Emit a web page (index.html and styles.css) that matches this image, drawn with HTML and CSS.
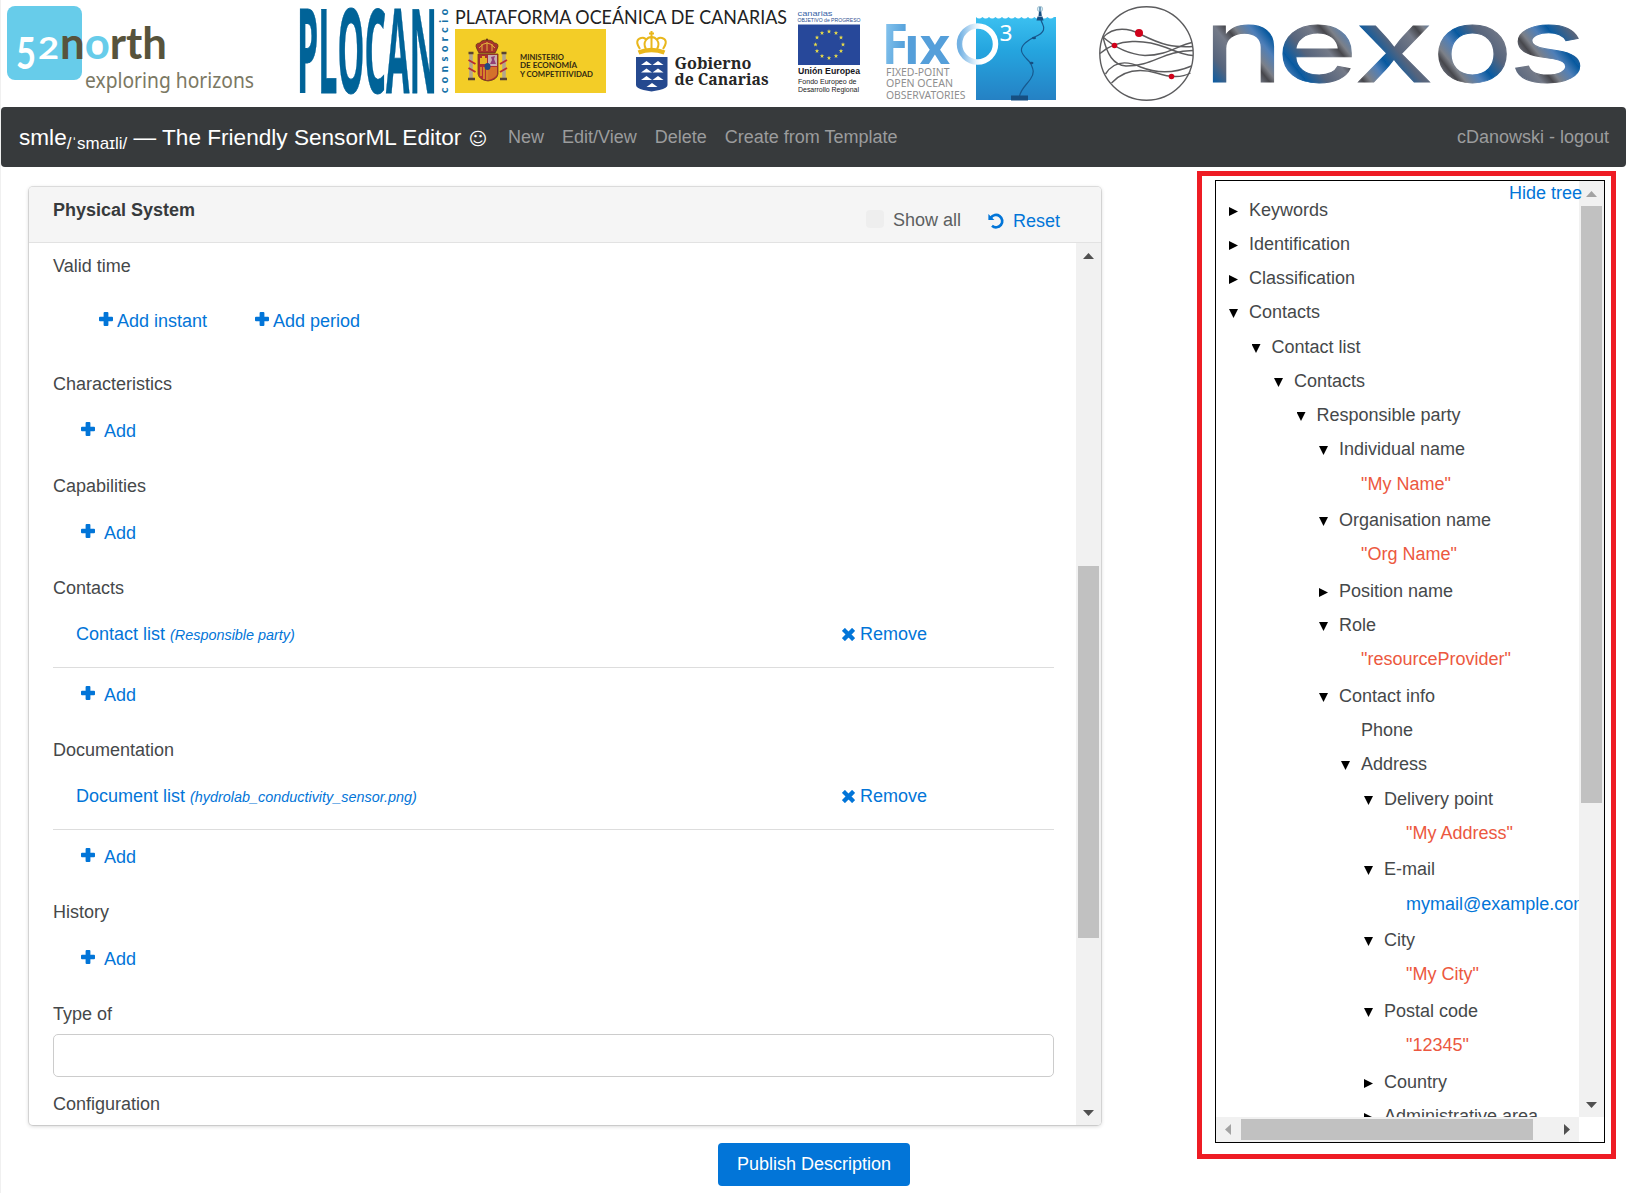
FILE: index.html
```html
<!DOCTYPE html>
<html lang="en">
<head>
<meta charset="utf-8">
<title>smle</title>
<link rel="stylesheet" href="styles.css">
</head>
<body>
<svg width="0" height="0" class="defs" aria-hidden="true">
  <defs>
    <symbol id="plus" viewBox="0 0 14 14"><path d="M5.6 0h2.8a1 1 0 0 1 1 1v3.8H13a1 1 0 0 1 1 1v2.4a1 1 0 0 1-1 1H9.400V13a1 1 0 0 1-1 1H5.600a1 1 0 0 1-1-1V9.200H1a1 1 0 0 1-1-1V5.800a1 1 0 0 1 1-1h3.600V1a1 1 0 0 1 1-1z"/></symbol>
    <symbol id="cross" viewBox="0 0 12 12"><path d="M2.700 2.700 9.300 9.300M9.300 2.700 2.700 9.300" fill="none" stroke="currentColor" stroke-width="4" stroke-linecap="square"/></symbol>
    <symbol id="undo" viewBox="0 0 16 16"><path d="M2.800 4.800A6.200 6.200 0 1 1 4 12.800" fill="none" stroke="currentColor" stroke-width="2.700"/><path d="M.4 1v6h6z"/></symbol>
    <path id="star" d="M0-2.300.6-.7 2.200-.7.9.3 1.400 1.900 0 .9-1.400 1.900-.9.3-2.200-.7-.6-.7z"/>
  </defs>
</svg>

<header class="logos">
  <svg class="logo" width="270" height="107" viewBox="0 0 270 107">
    <rect x="7" y="6" width="75" height="74" rx="8" fill="#67ccea"/>
    <g font-family="Lato" font-weight="700">
      <text x="16" y="69" font-size="43" fill="#fff" textLength="20" lengthAdjust="spacingAndGlyphs">5</text>
      <text x="38" y="59" font-size="31" fill="#fff" textLength="21" lengthAdjust="spacingAndGlyphs">2</text>
      <text x="60" y="59" font-size="43" fill="#57533c" textLength="107" lengthAdjust="spacingAndGlyphs">n<tspan fill="#67ccea">o</tspan>rth</text>
    </g>
    <text x="85" y="88" font-size="22.500" font-family="Noto Sans" fill="#7b7863" textLength="169" lengthAdjust="spacingAndGlyphs">exploring horizons</text>
  </svg>

  <svg class="logo" width="600" height="107" viewBox="270 0 600 107">
    <text x="297" y="93" font-size="116" font-family="Open Sans" font-weight="700" fill="#006398" stroke="#006398" stroke-width=".8" textLength="140" lengthAdjust="spacingAndGlyphs">PLOCAN</text>
    <text transform="translate(447.500 93) rotate(-90)" font-size="11" font-family="Lato" font-weight="900" fill="#1671a8" textLength="84">consorcio</text>
    <text x="455" y="24" font-size="18.500" font-family="Lato" fill="#222" textLength="332" lengthAdjust="spacingAndGlyphs">PLATAFORMA OCEÁNICA DE CANARIAS</text>
    <rect x="455" y="29" width="151" height="64" fill="#f3cd27"/>
    <g>
      <path d="M477 49q-3-6 3-6 1-3 7-3t7 3q6 0 3 6l-2 4h-16z" fill="#a8332b" stroke="#5f3018" stroke-width=".8"/>
      <path d="M479 48q4-5 8-5t8 5M482 51v-7M487 51v-9M492 51v-7" fill="none" stroke="#e2b33b" stroke-width="1"/>
      <circle cx="487" cy="39.500" r="1" fill="#5f3018"/>
      <path d="M478 54h20v20q-1 6-10 7-9-1-10-7z" fill="#b32d33" stroke="#683d22" stroke-width=".8"/>
      <path d="M479 55h9v11h-9z" fill="#a82f31"/><path d="M488 55h9v11h-9z" fill="#c8aeb0"/>
      <path d="M480 64v-6h2v-2h3v2h2v6z" fill="#e6b425"/><path d="M490 64l2-4-1-3 4-1-1 3 2 5z" fill="#914076"/>
      <path d="M481 67v9M484 67v12M487 69v11" stroke="#e6b425" stroke-width="1.300"/>
      <path d="M488 67h9v7q-1 4-9 6z" fill="#d4722b"/>
      <ellipse cx="487.500" cy="66.500" rx="3" ry="3.600" fill="#23497f"/>
      <path d="M471 54v24M504 54v24" stroke="#b3a58d" stroke-width="3.600"/>
      <path d="M468.500 60l7 4M468.500 68l7 4M500 64l7-4M500 72l7-4" stroke="#b62f32" stroke-width="2"/>
      <path d="M468 79h7M500 79h7M468.500 53h5M501.500 53h5" stroke="#5a4430" stroke-width="2.600"/>
    </g>
    <g font-family="Lato" font-weight="700" font-size="7" fill="#332b12">
      <text x="520" y="59.500" textLength="44" lengthAdjust="spacingAndGlyphs">MINISTERIO</text>
      <text x="520" y="68" textLength="57" lengthAdjust="spacingAndGlyphs">DE ECONOMÍA</text>
      <text x="520" y="76.500" textLength="73" lengthAdjust="spacingAndGlyphs">Y COMPETITIVIDAD</text>
    </g>
    <g fill="none" stroke="#e9b71c" stroke-width="2">
      <path d="M651.500 31v6M649 33.500h5"/>
      <path d="M640 49q-6-9 1-11 4-1 5 2 2-3 5.500-3t5.500 3q1-3 5-2 7 2 1 11M646 40q-3 4 0 9M657 40q3 4 0 9M651.500 38v10"/>
      <path d="M638.500 52.500q13-5 26 0" stroke-width="4.500"/>
    </g>
    <path d="M636 57h31.500v28q0 3-8 5l-8 1.500-8-1.500q-7.500-2-7.500-5z" fill="#25498f"/>
    <path fill="#fff" d="M641 65l5.500-4 5.500 4zM652.500 65l5.500-4 5.500 4zM641 72.500l5.500-4 5.500 4zM652.500 72.500l5.500-4 5.500 4zM641 80l5.500-4 5.500 4zM652.500 80l5.500-4 5.500 4zM646.500 87l5.500-4 5.500 4z"/>
    <g font-family="Noto Serif, DejaVu Serif, serif" font-weight="700" font-size="17" fill="#262626">
      <text x="674.500" y="68.500" textLength="77" lengthAdjust="spacingAndGlyphs">Gobierno</text>
      <text x="674.500" y="84.500" textLength="94" lengthAdjust="spacingAndGlyphs">de Canarias</text>
    </g>
    <g font-family="Liberation Sans">
      <text x="797.500" y="16" font-size="8" fill="#3a66a8" textLength="35" lengthAdjust="spacingAndGlyphs">canarias</text>
      <text x="797.500" y="21.500" font-size="5" fill="#2c4d90" textLength="63" lengthAdjust="spacingAndGlyphs">OBJETIVO de PROGRESO</text>
      <rect x="798" y="24.500" width="62" height="40.500" fill="#27489a"/>
      <g fill="#e9dc48">
        <use href="#star" x="829" y="31.500"/><use href="#star" x="836" y="33"/><use href="#star" x="841" y="37.500"/><use href="#star" x="843" y="44.500"/><use href="#star" x="841" y="51"/><use href="#star" x="836" y="56"/><use href="#star" x="829" y="58"/><use href="#star" x="822" y="56"/><use href="#star" x="817" y="51"/><use href="#star" x="815.500" y="44.500"/><use href="#star" x="817" y="37.500"/><use href="#star" x="822" y="33"/>
      </g>
      <text x="798" y="73.800" font-size="8.500" font-weight="700" fill="#16161c" textLength="62" lengthAdjust="spacingAndGlyphs">Unión Europea</text>
      <text x="798" y="84" font-size="7.500" fill="#222" textLength="58.500" lengthAdjust="spacingAndGlyphs">Fondo Europeo de</text>
      <text x="798" y="92" font-size="7.500" fill="#222" textLength="61" lengthAdjust="spacingAndGlyphs">Desarrollo Regional</text>
    </g>
  </svg>

  <svg class="logo" width="210" height="107" viewBox="870 0 210 107">
    <defs>
      <linearGradient id="sea" x1="0" y1="0" x2="0" y2="1"><stop offset="0" stop-color="#3bc0f0"/><stop offset=".4" stop-color="#25a5df"/><stop offset="1" stop-color="#2581c4"/></linearGradient>
      <linearGradient id="fix" x1="0" y1="0" x2="1" y2=".4"><stop offset="0" stop-color="#93cdf2"/><stop offset="1" stop-color="#4f9dd9"/></linearGradient>
      <linearGradient id="ring" x1="0" y1="0" x2="1" y2="0"><stop offset="0" stop-color="#72b1e3"/><stop offset=".45" stop-color="#e4f2fc"/><stop offset=".6" stop-color="#fff"/></linearGradient>
    </defs>
    <path d="M976 17q3 3 6.500 0 3 3 6.500 0 3 3 6.500 0 3 3 6.500 0 3 3 6.500 0 3 3 6.500 0 3 3 6.500 0 3 3 6.500 0 3 3 6.500 0 3 3 6.500 0 3 3 6.500 0 3 3 6.500 0H1056V100H976z" fill="url(#sea)"/>
    <text x="882" y="63.500" font-family="Noto Sans" font-weight="700" font-size="55" fill="url(#fix)" textLength="26" lengthAdjust="spacingAndGlyphs">F</text>
    <text x="904" y="63.500" font-family="Noto Sans" font-weight="700" font-size="50" fill="#559fda" textLength="46" lengthAdjust="spacingAndGlyphs">ıx</text>
    <circle cx="977.500" cy="44" r="18" fill="none" stroke="url(#ring)" stroke-width="5.500"/>
    <text x="999.500" y="41" font-family="Noto Sans" font-size="22.500" fill="#fff" textLength="13" lengthAdjust="spacingAndGlyphs">3</text>
    <g fill="none" stroke="#17598f" stroke-width="1.200"><path d="M1041 20c1 4 4 6 2.500 10-2 5-7 6-11 8-5 3-12 7-11 13 1 5 6 8 9 12 2 5 5 9 0 16-4 6-9 9-11 17"/></g>
    <path d="M1011 95.500h17v5h-17zM1036.500 20.500l1-4h5l1 4zM1038.500 16l.5-5h2.200l.6 5z" fill="#164f82"/>
    <circle cx="1040" cy="9" r="2.700" fill="#d4edf8" stroke="#87a9bb" stroke-width=".6"/><path d="M1040 7v5" stroke="#164f82"/>
    <ellipse cx="1034" cy="38" rx="2" ry="1.300" fill="#164f82"/><ellipse cx="1031.500" cy="63" rx="2" ry="1.300" fill="#164f82"/>
    <g font-family="Noto Sans" font-size="11.300" fill="#8f8f90">
      <text x="886" y="76" textLength="63.500" lengthAdjust="spacingAndGlyphs">FIXED-POINT</text>
      <text x="886" y="87.300" textLength="67" lengthAdjust="spacingAndGlyphs">OPEN OCEAN</text>
      <text x="886" y="98.800" textLength="79.500" lengthAdjust="spacingAndGlyphs">OBSERVATORIES</text>
    </g>
  </svg>

  <svg class="logo" width="546" height="107" viewBox="1080 0 546 107">
    <defs>
      <linearGradient id="steel" gradientUnits="userSpaceOnUse" x1="1213" y1="82" x2="1271" y2="36" spreadMethod="repeat"><stop offset="0" stop-color="#0a5ca3"/><stop offset=".22" stop-color="#56647c"/><stop offset=".48" stop-color="#747a88"/><stop offset=".6" stop-color="#47474c"/><stop offset=".68" stop-color="#7c8088"/><stop offset=".85" stop-color="#4f7fb8"/><stop offset="1" stop-color="#04579d"/></linearGradient>
    </defs>
    <g fill="none" stroke="#5c5c5e" stroke-width="1.400">
      <circle cx="1146.500" cy="53.500" r="46.700"/>
      <path d="M1103 37.500c11-12 27-9 38-3 22 11 32 13 52 12"/>
      <path d="M1100 53.500c18-16 46-14 66-6 12 5 20 8 27 8"/>
      <path d="M1103 37c9 8 22 17 42 18.500 22 0 33-10 47-13"/>
      <path d="M1105.500 74c9-14 22-13 35-7 20 8 37 5 51-1"/>
      <path d="M1111.500 83c14-15 31-14 45-10 15 5 25 5 34 0"/>
      <path d="M1103 37c4 17 10 28 23 29 28 0 36-15 67-15.500"/>
    </g>
    <g fill="#d0021b"><circle cx="1139" cy="33" r="4"/><circle cx="1114.500" cy="45.500" r="2.800"/><circle cx="1171.500" cy="76.500" r="2.800"/></g>
    <g font-family="Inter" font-weight="400" font-size="103" fill="url(#steel)" stroke="url(#steel)" stroke-width="1">
      <text x="1203" y="82" textLength="81" lengthAdjust="spacingAndGlyphs">n</text>
      <text x="1276" y="82" textLength="82" lengthAdjust="spacingAndGlyphs">e</text>
      <text x="1354" y="82" textLength="80" lengthAdjust="spacingAndGlyphs">x</text>
      <text x="1432" y="82" textLength="81" lengthAdjust="spacingAndGlyphs">o</text>
      <text x="1508" y="82" textLength="79" lengthAdjust="spacingAndGlyphs">s</text>
    </g>
  </svg>
</header>

<nav class="navbar">
  <span class="brand">smle<sub>/ˈsmaɪli/</sub> — The Friendly SensorML Editor <span class="smile">☺</span></span>
  <a class="nav-new">New</a><a>Edit/View</a><a>Delete</a><a>Create from Template</a>
  <a class="user">cDanowski - logout</a>
</nav>

<main class="content">
  <div class="editor">
    <section class="card">
      <div class="card-head">
        <h1>Physical System</h1>
        <span class="checkbox"></span><span class="show-all">Show all</span>
        <a class="reset"><svg width="16" height="16"><use href="#undo"/></svg>Reset</a>
      </div>
      <div class="card-body">
        <div class="fields">
          <div class="label">Valid time</div>
          <div class="time"><a><svg width="14" height="14"><use href="#plus"/></svg>Add instant</a><a><svg width="14" height="14"><use href="#plus"/></svg>Add period</a></div>
          <div class="label">Characteristics</div>
          <a class="add"><svg width="14" height="14"><use href="#plus"/></svg>Add</a>
          <div class="label">Capabilities</div>
          <a class="add"><svg width="14" height="14"><use href="#plus"/></svg>Add</a>
          <div class="label">Contacts</div>
          <div class="entry"><a class="entry-name">Contact list <i>(Responsible party)</i></a><a class="remove"><svg width="13" height="13"><use href="#cross"/></svg>Remove</a></div>
          <a class="add after-entry"><svg width="14" height="14"><use href="#plus"/></svg>Add</a>
          <div class="label">Documentation</div>
          <div class="entry"><a class="entry-name">Document list <i>(hydrolab_conductivity_sensor.png)</i></a><a class="remove"><svg width="13" height="13"><use href="#cross"/></svg>Remove</a></div>
          <a class="add after-entry"><svg width="14" height="14"><use href="#plus"/></svg>Add</a>
          <div class="label">History</div>
          <a class="add"><svg width="14" height="14"><use href="#plus"/></svg>Add</a>
          <div class="label">Type of</div>
          <input class="text-input" type="text" aria-label="Type of">
          <div class="label">Configuration</div>
        </div>
        <div class="vbar">
          <svg class="arrow" width="11" height="6"><path d="M0 6 5.500 0 11 6z"/></svg>
          <div class="thumb form-thumb"></div>
          <svg class="arrow end" width="11" height="6"><path d="M0 0h11L5.500 6z"/></svg>
        </div>
      </div>
    </section>
    <button class="publish">Publish Description</button>
  </div>

  <aside class="highlight">
    <div class="tree-box">
      <a class="hide-tree">Hide tree</a>
      <div class="tree">
        <div class="row closed d0">Keywords</div>
        <div class="row closed d0">Identification</div>
        <div class="row closed d0">Classification</div>
        <div class="row open d0 h35">Contacts</div>
        <div class="row open d1">Contact list</div>
        <div class="row open d2">Contacts</div>
        <div class="row open d3">Responsible party</div>
        <div class="row open d4 h35">Individual name</div>
        <div class="row value d5 h36">"My Name"</div>
        <div class="row open d4">Organisation name</div>
        <div class="row value d5 h37">"Org Name"</div>
        <div class="row closed d4">Position name</div>
        <div class="row open d4">Role</div>
        <div class="row value d5 h37">"resourceProvider"</div>
        <div class="row open d4">Contact info</div>
        <div class="row d5">Phone</div>
        <div class="row open d5 h35">Address</div>
        <div class="row open d6">Delivery point</div>
        <div class="row value d7 h36">"My Address"</div>
        <div class="row open d6 h35">E-mail</div>
        <div class="row mail d7 h36">mymail@example.com</div>
        <div class="row open d6">City</div>
        <div class="row value d7 h37">"My City"</div>
        <div class="row open d6">Postal code</div>
        <div class="row value d7 h37">"12345"</div>
        <div class="row closed d6">Country</div>
        <div class="row closed d6">Administrative area</div>
      </div>
      <div class="vbar">
        <svg class="arrow muted" width="11" height="6"><path d="M0 6 5.500 0 11 6z"/></svg>
        <div class="thumb tree-thumb"></div>
        <svg class="arrow end" width="11" height="6"><path d="M0 0h11L5.500 6z"/></svg>
      </div>
      <div class="hbar">
        <svg class="muted" width="6" height="11"><path d="M6 0v11L0 5.500z"/></svg>
        <div class="hthumb"></div>
        <svg class="hend" width="6" height="11"><path d="M0 0v11L6 5.500z"/></svg>
      </div>
    </div>
  </aside>
</main>
</body>
</html>
```

FILE: styles.css
```css
* { box-sizing: border-box; }

body {
  margin: 0;
  height: 1193px;
  border-left: 1px solid #f0f0f0;
  background: #fff;
  color: #45484a;
  font: 18px/27px "Liberation Sans", Arial, sans-serif;
  overflow: hidden;
}

svg { fill: currentColor; flex: none; }
.defs { display: block; height: 0; }
a { color: #0275d8; white-space: nowrap; }

.logos { display: flex; height: 107px; margin-left: -1px; }
.logo { display: block; }

.navbar {
  display: flex;
  align-items: center;
  height: 60px;
  padding: 0 17px 0 18px;
  border-radius: 4px;
  background: #373a3c;
}
.navbar a { color: #9b9c9d; margin-left: 18px; }
.navbar .nav-new { margin-left: 20px; }
.navbar .user { margin-left: auto; }
.brand { width: 469px; color: #fff; font-size: 22.6px; white-space: nowrap; }
.brand sub { font-size: 75%; line-height: 0; position: relative; vertical-align: baseline; bottom: -0.25em; }
.smile { margin-left: 1px; font-family: "DejaVu Sans", sans-serif; font-size: 18px; line-height: 1; }

.content { display: flex; align-items: flex-start; }

.editor {
  width: 1074px;
  margin: 20px 0 0 27px;
  padding-left: 1px;
}
.card {
  width: 1072px;
  height: 938px;
  border-radius: 4px;
  background: #fff;
  box-shadow: 0 1px 4px rgba(0, 0, 0, .2), 0 0 0 1px #e6e6e6;
  overflow: hidden;
  display: flex;
  flex-direction: column;
}
.card-head {
  display: flex;
  align-items: flex-start;
  height: 56px;
  padding: 10px 41px 0 24px;
  border-bottom: 1px solid #e2e2e2;
  background: #f5f5f5;
}
.card-head h1 { flex: 1; margin: 0; font-size: 18px; line-height: 27px; color: #373a3c; }
.checkbox { width: 18px; height: 18px; margin: 13px 9px 0 0; border-radius: 4px; background: #eee; }
.show-all { margin-top: 10px; color: #5c5f61; }
.reset { display: flex; align-items: center; margin: 11px 0 0 27px; }
.reset svg { margin: -1px 9px 0 0; }

.card-body { display: grid; grid-template-columns: 1fr 25px; flex: 1; min-height: 0; }
.fields { padding: 10px 22px 0 24px; overflow: hidden; }
.label { height: 27px; }
.time { display: flex; gap: 48px; margin: 28px 0 36px; padding-left: 46px; }
.time a, .add, .remove { display: flex; align-items: center; }
.time svg { margin: -5px 4px 0 0; }
.add { margin: 20px 0 28px; padding-left: 28px; }
.add svg { margin: -5px 9px 0 0; }
.after-entry { margin-top: 14px; }
.entry { display: flex; height: 66px; padding: 19px 0 0 23px; border-bottom: 1px solid #ddd; }
.entry-name { width: 766px; }
.entry-name i { font-size: 80%; line-height: 1; }
.remove svg { margin: 0 5px 0 0; }
.remove { height: 27px; }
.text-input {
  display: block;
  width: 100%;
  height: 43px;
  margin: 6px 0 14px;
  border: 1px solid #ccc;
  border-radius: 5px;
}

.vbar { display: flex; flex-direction: column; align-items: center; padding: 10px 0 9px; background: #f1f1f1; color: #505050; }
.thumb { width: 21px; background: #c1c1c1; }
.end { margin-top: auto; }
.muted { color: #a3a3a3; }
.form-thumb { height: 372px; margin-top: 307px; }

.publish {
  display: block;
  width: 192px;
  height: 43px;
  margin: 18px 0 0 689px;
  border: 0;
  border-radius: 4px;
  background: #0275d8;
  color: #fff;
  font: inherit;
  padding: 0;
}

.highlight { width: 419px; height: 988px; margin: 4px 0 0 95px; padding: 4px 6px 0 13px; border: 5px solid #ee1c24; }
.tree-box {
  position: relative;
  display: grid;
  grid-template: 936px 25px / 363px 25px;
  width: 390px;
  height: 963px;
  border: 1px solid #000;
}
.hide-tree { position: absolute; top: -1px; right: 22px; }
.tree { padding-top: 16px; overflow: hidden; }
.row { display: flex; height: 34px; white-space: nowrap; }
.h35 { height: 35px; }
.h36 { height: 36px; }
.h37 { height: 37px; }
.d0 { padding-left: 33px; }
.d1 { padding-left: 55.5px; }
.d2 { padding-left: 78px; }
.d3 { padding-left: 100.5px; }
.d4 { padding-left: 123px; }
.d5 { padding-left: 145px; }
.d6 { padding-left: 168px; }
.d7 { padding-left: 190px; }
.open::before, .closed::before {
  content: "";
  flex: none;
  width: 9px;
  height: 9px;
  margin: 10px 11px 0 -20px;
  background: #000;
}
.open::before { clip-path: polygon(0 0, 100% 0, 50% 100%); }
.closed::before { clip-path: polygon(0 0, 100% 50%, 0 100%); }
.value { color: #ec5840; }
.mail { color: #0275d8; }
.tree-thumb { height: 597px; margin-top: 9px; }

.hbar { display: flex; align-items: center; padding: 0 9px; background: #f1f1f1; color: #505050; }
.hthumb { width: 292px; height: 21px; margin-left: 10px; background: #c1c1c1; }
.hend { margin-left: auto; }
```
